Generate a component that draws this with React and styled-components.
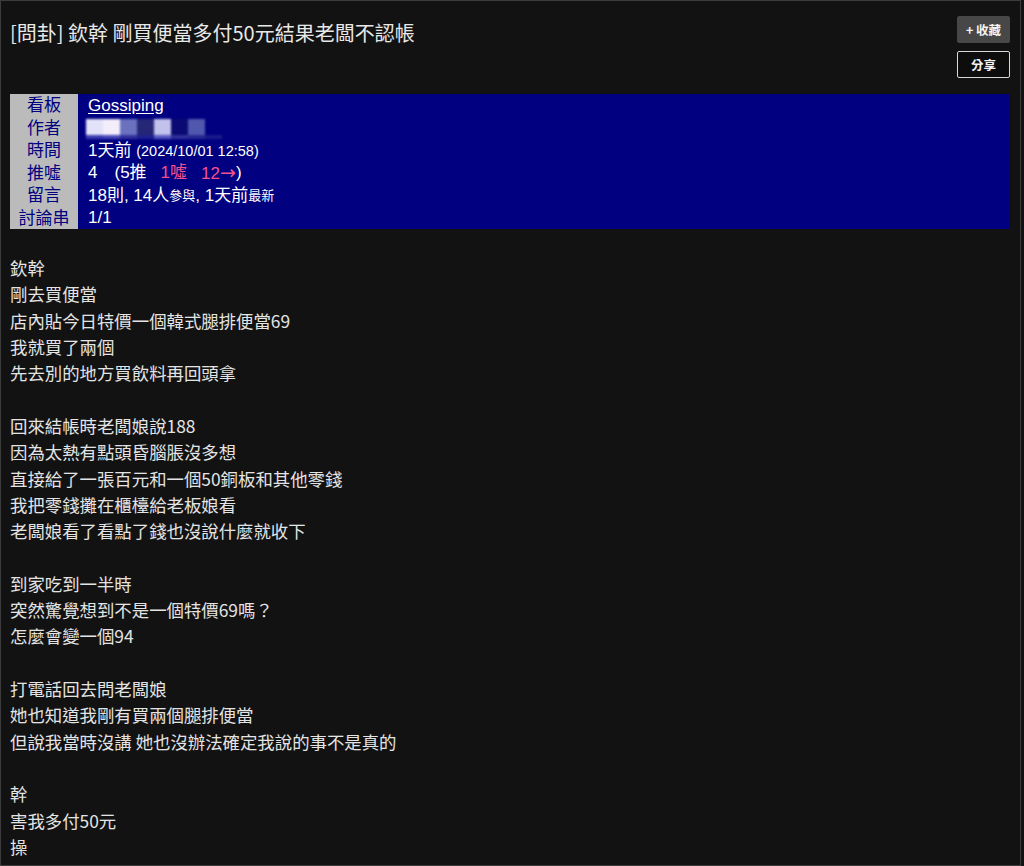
import { Fragment } from 'react';
import styled, { createGlobalStyle } from 'styled-components';

const GlobalStyle = createGlobalStyle`
  html, body {
    margin: 0;
    padding: 0;
    background: #121212;
  }
  body {
    font-family: "Noto Sans CJK TC", "Noto Sans", "Liberation Sans", sans-serif;
  }
`

const Page = styled.div`
  box-sizing: border-box;
  width: 1021px;
  height: 866px;
  overflow: hidden;
  border: 1px solid #3d3d3d;
  padding: 0 10px 0 9px;
  background: #121212;
  color: #e2e2e2;
`

const Header = styled.div`
  display: flex;
  justify-content: space-between;
  align-items: flex-start;
  margin-bottom: 16px;
`

const Title = styled.h1`
  margin: 18px 0 0 0;
  font-size: 20px;
  font-weight: normal;
  line-height: 28px;
  color: #e8e8e8;
`

const Actions = styled.div`
  display: flex;
  flex-direction: column;
  gap: 8px;
  padding-top: 15px;
`

const Btn = styled.div`
  box-sizing: border-box;
  width: 53px;
  height: 27px;
  display: flex;
  align-items: center;
  justify-content: center;
  font-size: 12.5px;
  font-weight: bold;
  color: #f4f4f4;
  background: ${({outline})=>outline?'#0d0d0d':'#474747'};
  border: 1px solid ${({outline})=>outline?'#d8d8d8':'#474747'};
  border-radius: 2px;
`

const Meta = styled.div`
  display: grid;
  grid-template-columns: 68px 1fr;
  grid-auto-rows: 22.5px;
  background: #000080;
  font-family: "Liberation Sans", "Noto Sans CJK TC", sans-serif;
`

const Label = styled.div`
  background: #bbbbbb;
  color: #000080;
  text-align: center;
  font-size: 17px;
  line-height: 23.5px;
`

const Value = styled.div`
  color: #ffffff;
  font-size: 17px;
  line-height: 22.5px;
  padding: 1px 0 0 10px;
  display: flex;
  align-items: center;
  white-space: pre;
`

const Board = styled.span`
  text-decoration: underline;
  text-underline-offset: 2px;
`

const Small = styled.span`
  font-size: ${({size})=>size || 14.5}px;
`

const Boo = styled.span`
  color: #f5508c;
  margin-left: ${({gap})=>gap}px;
`

const Arrow = styled.span`
  font-family: "DejaVu Sans", sans-serif;
  font-size: 19px;
  line-height: 20px;
`

const Gap = styled.span`
  margin-left: ${({gap})=>gap}px;
`

const Blur = styled.div`
  display: flex;
  flex-direction: column;
  filter: blur(1.2px);
  margin-left: -2px;
  margin-top: 2px;
`

const BlurRow = styled.div`
  display: flex;
`

const Cell = styled.span`
  display: block;
  width: 17px;
  height: ${({h})=>h}px;
`

const Body = styled.div`
  margin-top: 26px;
  font-size: 17.4px;
  line-height: 26.32px;
  white-space: pre-wrap;
  color: #e4e4e4;
`

const pixels = [
  ['#e2e2f8', '#f3eefa', '#6a72c0', '#262676', '#c2c2ec', '#0a0a72', '#5058ae', '#000080'],
  ['#3c3cb0', '#4848b8', '#30309a', '#202090', '#5858c0', '#303098', '#282890', '#1a1a8a'],
]

const metaRows = [
  { label: '看板', value: <Board>Gossiping</Board> },
  {
    label: '作者',
    value: (
      <Blur>
        <BlurRow>{pixels[0].map((c, i) => <Cell key={i} h={16} style={{ background: c }} />)}</BlurRow>
        <BlurRow>{pixels[1].map((c, i) => <Cell key={i} h={4} style={{ background: c }} />)}</BlurRow>
      </Blur>
    ),
  },
  { label: '時間', value: <>1天前 <Small>(2024/10/01 12:58)</Small></> },
  { label: '推噓', value: <>4<Gap gap={17}>(5推</Gap><Boo gap={14}>1噓</Boo><Boo gap={14}>12<Arrow>→</Arrow></Boo>)</> },
  { label: '留言', value: <>18則, 14人<Small size={13}>參與</Small>, 1天前<Small size={13}>最新</Small></> },
  { label: '討論串', value: '1/1' },
]

const content = `欽幹
剛去買便當
店內貼今日特價一個韓式腿排便當69
我就買了兩個
先去別的地方買飲料再回頭拿

回來結帳時老闆娘說188
因為太熱有點頭昏腦脹沒多想
直接給了一張百元和一個50銅板和其他零錢
我把零錢攤在櫃檯給老板娘看
老闆娘看了看點了錢也沒說什麼就收下

到家吃到一半時
突然驚覺想到不是一個特價69嗎？
怎麼會變一個94

打電話回去問老闆娘
她也知道我剛有買兩個腿排便當
但說我當時沒講 她也沒辦法確定我說的事不是真的

幹
害我多付50元
操`

const App = () => {
  return (
    <Page>
      <GlobalStyle />
      <Header>
        <Title>[問卦] 欽幹 剛買便當多付50元結果老闆不認帳</Title>
        <Actions>
          <Btn>+ 收藏</Btn>
          <Btn outline>分享</Btn>
        </Actions>
      </Header>
      <Meta>
        {metaRows.map((row, index) => (
          <Fragment key={index}>
            <Label>{row.label}</Label>
            <Value>{row.value}</Value>
          </Fragment>
        ))}
      </Meta>
      <Body>{content}</Body>
    </Page>
  )
}

export default App
